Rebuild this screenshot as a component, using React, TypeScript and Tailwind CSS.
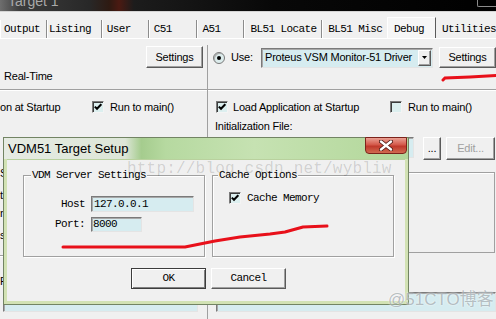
import React from 'react';

const ui = "font-['Liberation_Sans',Arial,sans-serif] text-[11px] tracking-[-0.2px]";
const mono = "font-['Liberation_Mono','Courier_New',monospace] text-[11px] tracking-[-0.6px]";

const raised =
  'bg-[#f0f0f0] border border-t-white border-l-white border-r-[#5a5a5a] border-b-[#5a5a5a] shadow-[inset_-1px_-1px_0_#a0a0a0]';
const sunken =
  'bg-[#d6ecf0] border border-t-[#7a7a7a] border-l-[#7a7a7a] border-r-[#e4e4e4] border-b-[#e4e4e4] shadow-[inset_1px_1px_0_#a8a8a8]';

const tabs = [
  { label: 'Output', cls: 'w-[46px] pl-[4px]' },
  { label: 'Listing', cls: 'w-[55px] pl-[2px] border-l' },
  { label: 'User', cls: 'w-[47px] pl-[5px] border-l' },
  { label: 'C51', cls: 'w-[48px] pl-[5px] border-l' },
  { label: 'A51', cls: 'w-[48px] pl-[6px] border-l' },
  { label: 'BL51 Locate', cls: 'w-[78px] pl-[6px] border-l' },
  { label: 'BL51 Misc', cls: 'w-[66px] pl-[6px] border-l' },
];

function CheckBox({ checked = false }: { checked?: boolean }) {
  return (
    <span className="w-[12px] h-[12px] shrink-0 flex items-center justify-center bg-[#dcefef] border border-t-[#7a7a7a] border-l-[#7a7a7a] border-r-[#f4f4f4] border-b-[#f4f4f4] shadow-[inset_1px_1px_0_#3c3c3c]">
      {checked && (
        <svg width="8" height="8" viewBox="0 0 8 8">
          <path d="M0.8 3.6 L3 5.8 L7.3 1.2" stroke="#000" strokeWidth="2" fill="none" />
        </svg>
      )}
    </span>
  );
}

function Radio() {
  return (
    <span className="w-[12px] h-[12px] shrink-0 rounded-full flex items-center justify-center bg-[#dcecec] border border-[#7a7a7a] shadow-[inset_1px_1px_0_#b0b0b0]">
      <span className="w-[4px] h-[4px] rounded-full bg-black" />
    </span>
  );
}

export default function App() {
  return (
    <div className={`relative w-[496px] h-[319px] overflow-hidden bg-[#f0f0f0] text-black ${ui}`}>
      {/* caption of the options window, cropped */}
      <div className="h-[11px] flex items-start overflow-hidden bg-[linear-gradient(90deg,#6e6e6e_0%,#3c3c3c_4%,#282828_18%,#2e1a12_22%,#4b1a12_24%,#1c1c1c_27%,#080808_55%,#000_100%)]">
        <span className="ml-[8px] -mt-[7px] text-[14px] leading-[16px] tracking-normal text-[#a9a9a9]">Target 1</span>
        <span className="ml-auto w-[19px] h-[7px] border-l border-b border-[#8c8c8c] rounded-bl-[2px]" />
      </div>
      <div className="h-[1px] bg-[#d4d4d4]" />

      {/* tabs */}
      <div className={`flex items-end h-[26px] ${mono}`}>
        {tabs.map((t) => (
          <div
            key={t.label}
            className={`h-[18px] flex items-center whitespace-nowrap border-l-[#8c8c8c] shadow-[inset_1px_0_0_#fff] ${t.cls}`}
          >
            {t.label}
          </div>
        ))}
        <div className="w-[49px] h-[21px] pl-[6px] pt-[3px] whitespace-nowrap bg-[#f6f6f6] border border-b-0 border-t-white border-l-white border-r-[#5a5a5a]">
          Debug
        </div>
        <div className="flex-1 h-[18px] flex items-center pl-[6px] whitespace-nowrap">Utilities</div>
      </div>
      <div className="h-[1px] bg-white" />

      {/* body */}
      <div className="flex h-[280px] pt-[6px]">
        {/* left half */}
        <div className="w-[207px] flex flex-col">
          <div className="h-[45px] border-b border-[#a0a0a0]">
            <div className="flex justify-end mt-[1px] pr-[4px]">
              <div className={`w-[57px] h-[22px] flex items-center justify-center ${raised}`}>Settings</div>
            </div>
            <div className="pl-[4px] mt-[1px] leading-[14px]">Real-Time</div>
          </div>
          <div className="h-[1px] bg-white" />
          <div className="flex items-center h-[12px] mt-[10px]">
            <span className="w-[92px] whitespace-nowrap">on at Startup</span>
            <CheckBox checked />
            <span className="ml-[6px] whitespace-nowrap">Run to main()</span>
          </div>
          <div className="leading-[14px] mt-[53px] whitespace-nowrap">Se</div>
          <div className="leading-[14px] mt-[8px] whitespace-nowrap">ts</div>
          <div className="leading-[14px] mt-[4px] whitespace-nowrap">nt</div>
          <div className="leading-[14px] mt-[8px] whitespace-nowrap">s</div>
          <div className="h-[1px] mt-[13px] bg-[#a0a0a0] shadow-[0_1px_0_#fff]" />
          <div className="leading-[14px] mt-[18px] whitespace-nowrap">F</div>
          <div className={`ml-[3px] mt-[4px] w-[195px] h-[20px] ${sunken}`} />
        </div>

        {/* right half */}
        <div className="flex-1 flex flex-col border-l border-[#a0a0a0]">
          <div className="h-[45px] border-b border-[#a0a0a0]">
            <div className="flex items-center h-[21px] mt-[2px]">
              <span className="ml-[5px]"><Radio /></span>
              <span className="ml-[6px] w-[30px]">Use:</span>
              <div className={`w-[172px] h-[20px] flex items-center pl-[3px] pr-[1px] ${sunken}`}>
                <span className="flex-1 whitespace-nowrap">Proteus VSM Monitor-51 Driver</span>
                <span className={`w-[13px] h-[16px] flex items-center justify-center ${raised}`}>
                  <svg width="5" height="3" viewBox="0 0 5 3">
                    <path d="M0 0 H5 L2.5 3 Z" fill="#000" />
                  </svg>
                </span>
              </div>
              <div className={`ml-[6px] w-[57px] h-[21px] flex items-center justify-center ${raised}`}>Settings</div>
            </div>
          </div>
          <div className="h-[1px] bg-white" />
          <div className="flex items-center h-[12px] mt-[10px]">
            <span className="ml-[8px]"><CheckBox checked /></span>
            <span className="ml-[5px] w-[152px] whitespace-nowrap">Load Application at Startup</span>
            <span className="ml-[5px]"><CheckBox /></span>
            <span className="ml-[6px] whitespace-nowrap">Run to main()</span>
          </div>
          <div className="ml-[7px] mt-[6px] leading-[14px]">Initialization File:</div>
          <div className="flex items-start mt-[4px] h-[23px]">
            <div className={`ml-[1px] w-[205px] h-[21px] ${sunken}`} />
            <div className={`ml-[9px] w-[18px] h-[23px] flex items-center justify-center ${raised}`}>...</div>
            <div className={`ml-[5px] w-[49px] h-[23px] flex items-center justify-center text-[#a0a0a0] ${raised}`}>
              Edit...
            </div>
          </div>
          <div className="ml-[4px] mr-[1px] mt-[12px] h-[81px] border border-[#a0a0a0] shadow-[inset_1px_1px_0_#fff]" />
          <div className={`ml-[8px] mt-[39px] h-[20px] ${sunken}`} />
        </div>
      </div>

      {/* VDM51 Target Setup dialog */}
      <div className="absolute left-[3px] top-[137px] w-[406px] h-[168px] flex flex-col border border-[#728463] bg-[#d2e2b4]">
        <div className="h-[21px] flex items-start bg-[linear-gradient(90deg,#e6ebe3_0%,#dde6d7_30%,#a5cc8e_34%,#b6d9a0_40%,#c6e2b2_62%,#b2d79a_100%)]">
          <span className="pl-[4px] leading-[21px] text-[13px] tracking-normal whitespace-nowrap">VDM51 Target Setup</span>
          <div className="ml-auto mr-[1px] -mt-[1px] w-[42px] h-[17px] flex items-center justify-center rounded-b-[4px] border border-[#7c231b] bg-[linear-gradient(180deg,#eaa093_0%,#d4594a_45%,#c0392b_55%,#d06a50_100%)]">
            <svg width="14" height="11" viewBox="0 0 14 11">
              <path d="M2 1.5 L12 9.5 M12 1.5 L2 9.5" stroke="#4a1510" strokeWidth="4" strokeLinecap="round" />
              <path d="M2 1.5 L12 9.5 M12 1.5 L2 9.5" stroke="#fff" strokeWidth="2.4" strokeLinecap="round" />
            </svg>
          </div>
        </div>
        <div className="flex-1 flex flex-col px-[3px] pb-[3px]">
          <div className="flex-1 bg-[#f0f0f0] border-t border-[#b9d19e] pl-[16px] pt-[15px]">
            <div className="flex gap-[7px]">
              {/* server settings */}
              <div className="relative w-[182px] h-[82px] border border-[#a0a0a0] shadow-[inset_1px_1px_0_#fff,1px_1px_0_#fff]">
                <span className={`absolute left-[7px] -top-[8px] px-[1px] leading-[14px] bg-[#f0f0f0] whitespace-nowrap ${mono}`}>
                  VDM Server Settings
                </span>
                <div className={`flex flex-col pt-[20px] ${mono}`}>
                  <div className="flex items-center h-[16px]">
                    <span className="w-[61px] text-right">Host</span>
                    <div className={`ml-[6px] w-[103px] h-[16px] flex items-center pl-[2px] ${sunken}`}>127.0.0.1</div>
                  </div>
                  <div className="flex items-center h-[15px] mt-[5px]">
                    <span className="w-[61px] text-right">Port:</span>
                    <div className={`ml-[6px] w-[51px] h-[15px] flex items-center pl-[1px] ${sunken}`}>8000</div>
                  </div>
                </div>
              </div>
              {/* cache options */}
              <div className="relative w-[182px] h-[82px] border border-[#a0a0a0] shadow-[inset_1px_1px_0_#fff,1px_1px_0_#fff]">
                <span className={`absolute left-[5px] -top-[8px] px-[1px] leading-[14px] bg-[#f0f0f0] whitespace-nowrap ${mono}`}>
                  Cache Options
                </span>
                <div className={`flex items-center ml-[16px] mt-[14px] ${mono}`}>
                  <CheckBox checked />
                  <span className="ml-[6px] whitespace-nowrap">Cache Memory</span>
                </div>
              </div>
            </div>
            <div className={`flex gap-[5px] ml-[108px] mt-[11px] ${mono}`}>
              <div className="w-[75px] h-[21px] flex items-center justify-center bg-[#f0f0f0] border border-[#3c3c3c] shadow-[inset_1px_1px_0_#fff,inset_-1px_-1px_0_#808080]">
                OK
              </div>
              <div className={`w-[75px] h-[21px] flex items-center justify-center ${raised}`}>Cancel</div>
            </div>
          </div>
        </div>
      </div>

      {/* watermarks */}
      <span className="absolute left-[127px] top-[160px] font-['Liberation_Mono',monospace] text-[16px] tracking-[0.2px] leading-[18px] text-black/15 whitespace-nowrap pointer-events-none">
        http://blog.csdn.net/wybliw
      </span>
      <span className="absolute left-[388px] top-[290px] font-['Liberation_Sans','Noto_Sans_CJK_SC',sans-serif] text-[17px] leading-[20px] tracking-normal text-[#8d979c]/60 [text-shadow:0_0_2px_#fff] whitespace-nowrap pointer-events-none">
        @51CTO博客
      </span>

      {/* red pen marks */}
      <svg className="absolute left-0 top-0 pointer-events-none" width="496" height="319" viewBox="0 0 496 319">
        <path
          d="M63 247 L185 247 L200 244 L215 241 L240 237 L270 234 L285 232 L303 227 L327 226"
          stroke="#e8101a"
          strokeWidth="3"
          fill="none"
          strokeLinecap="round"
          strokeLinejoin="round"
        />
        <path d="M443 80 L445 78 L470 77 L496 75.5" stroke="#e8101a" strokeWidth="3" fill="none" strokeLinecap="round" />
      </svg>
    </div>
  );
}
